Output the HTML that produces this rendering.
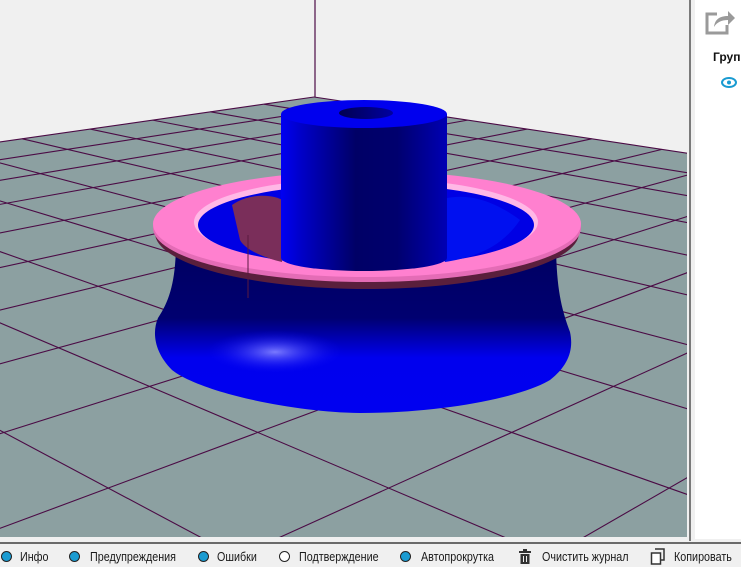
<!DOCTYPE html>
<html><head><meta charset="utf-8"><style>
html,body{margin:0;padding:0;width:741px;height:567px;overflow:hidden;background:#f0f0f0;font-family:"Liberation Sans",sans-serif;}
#vp{position:absolute;left:0;top:0;width:687px;height:537px;overflow:hidden;background:#f0f0f0}
.t{position:absolute;top:550px;font-size:12.5px;line-height:14px;color:#1a1a1a;white-space:nowrap;transform:scaleX(0.86);transform-origin:0 0}
.r{position:absolute;top:551px;width:9px;height:9px;border-radius:50%;border:1.5px solid #222;background:#1a9bd1}
</style></head><body>
<div id="vp">
<svg id="s" width="687" height="537" viewBox="0 0 687 537" xmlns="http://www.w3.org/2000/svg">
<defs>
<linearGradient id="cyl" x1="0" x2="1" y1="0" y2="0">
<stop offset="0" stop-color="#0000f2"/><stop offset="0.12" stop-color="#0000c8"/><stop offset="0.45" stop-color="#000066"/><stop offset="0.7" stop-color="#00006e"/><stop offset="1" stop-color="#0000b4"/>
</linearGradient>
<linearGradient id="body" x1="0" x2="0" y1="0" y2="1">
<stop offset="0" stop-color="#000060"/><stop offset="0.45" stop-color="#000070"/><stop offset="0.58" stop-color="#0000b8"/><stop offset="0.68" stop-color="#0000ee"/><stop offset="1" stop-color="#0000f0"/>
</linearGradient>
<radialGradient id="hl" cx="0.5" cy="0.5" r="0.5">
<stop offset="0" stop-color="#7a7aff"/><stop offset="1" stop-color="#0000ee" stop-opacity="0"/>
</radialGradient>
<linearGradient id="hole" x1="0" x2="1"><stop offset="0" stop-color="#000050"/><stop offset="1" stop-color="#0000a0"/></linearGradient>
</defs>
<line x1="315" y1="0" x2="315" y2="97" stroke="#4b0b45" stroke-width="1.2"/>
<polygon points="0,142 314,97 687,153 687,537 0,537" fill="#8ca0a1"/>
<g id="grid" stroke="#4b0b45" stroke-width="1.1"></g>
<path d="M176,240 C176,280 170,300 158,318 C152,332 154,352 172,370 C200,392 290,412 360,413 C440,413 520,398 550,380 C568,366 574,350 570,332 C562,310 556,290 556,240 Z" fill="url(#body)"/>
<ellipse cx="275" cy="352" rx="70" ry="22" fill="url(#hl)"/>
<ellipse cx="367" cy="233" rx="212" ry="56" fill="#5a1f3c"/>
<ellipse cx="367" cy="228" rx="214" ry="54" fill="#e46cb6"/>
<ellipse cx="367" cy="224" rx="214" ry="53" fill="#ff80cf"/>
<ellipse cx="366" cy="222" rx="172" ry="44" fill="#ffb8e6"/>
<ellipse cx="366" cy="225" rx="168" ry="41" fill="#0000e4"/>
<path d="M232,205 C250,192 275,195 282,200 L282,262 C265,258 245,250 240,240 Z" fill="#7a2e5a"/>
<path d="M440,200 C470,190 500,205 520,220 C500,250 470,258 445,262 Z" fill="#0010f0"/>
<path d="M281,114 L281,258 A83,13 0 0 0 447,258 L447,114 Z" fill="url(#cyl)"/>
<ellipse cx="364" cy="114" rx="83" ry="14" fill="#0000ee"/>
<ellipse cx="366" cy="113" rx="27" ry="6" fill="url(#hole)"/>
<line x1="248" y1="235" x2="248" y2="298" stroke="#5a1a40" stroke-width="1"/>
</svg>
</div>
<div style="position:absolute;left:687px;top:0;width:54px;height:541px;background:#f0f0f0"></div>
<div style="position:absolute;left:689px;top:0;width:2px;height:541px;background:#7a7a7a"></div>
<div style="position:absolute;left:695px;top:0;width:46px;height:539px;background:#fff"></div>
<svg style="position:absolute;left:703px;top:6px" width="34" height="30" viewBox="0 0 34 30">
<path d="M14,8 H4 V27 H24 V19" fill="none" stroke="#9a9a9a" stroke-width="3"/>
<path d="M11,21 C12,13 17,10 25,10 V5 L32,12 L25,19 V14 C19,14 14,16 11,21 Z" fill="#9a9a9a"/>
</svg>
<div style="position:absolute;left:713px;top:50px;font:bold 12px 'Liberation Sans',sans-serif;color:#111">Груп</div>
<svg style="position:absolute;left:721px;top:77px" width="16" height="11" viewBox="0 0 16 11"><ellipse cx="8" cy="5.5" rx="7" ry="4.5" fill="none" stroke="#1a9bd1" stroke-width="2"/><circle cx="8" cy="5.5" r="2" fill="#1a9bd1"/></svg>
<div style="position:absolute;left:0;top:542px;width:741px;height:2px;background:#6a6a6a"></div>
<span class="r" style="left:1px"></span><span class="t" style="left:20px">Инфо</span>
<span class="r" style="left:69px"></span><span class="t" style="left:90px">Предупреждения</span>
<span class="r" style="left:198px"></span><span class="t" style="left:217px">Ошибки</span>
<span class="r" style="left:279px;background:#fff"></span><span class="t" style="left:299px">Подтверждение</span>
<span class="r" style="left:400px"></span><span class="t" style="left:421px">Автопрокрутка</span>
<svg style="position:absolute;left:519px;top:549px" width="12" height="15" viewBox="0 0 12 15"><rect x="0" y="2" width="12" height="2" fill="#333"/><rect x="4" y="0" width="4" height="2" fill="#333"/><rect x="1.5" y="5" width="9" height="10" fill="#333"/><rect x="4" y="7" width="1" height="6" fill="#f0f0f0"/><rect x="7" y="7" width="1" height="6" fill="#f0f0f0"/></svg>
<span class="t" style="left:542px">Очистить журнал</span>
<svg style="position:absolute;left:650px;top:548px" width="16" height="17" viewBox="0 0 16 17"><path d="M5,1 H14 V12 H11" fill="none" stroke="#333" stroke-width="1.5"/><rect x="1.5" y="5" width="9" height="11" fill="#fff" stroke="#333" stroke-width="1.5"/></svg>
<span class="t" style="left:674px">Копировать</span>
<script>
(function(){
var g=document.getElementById('grid');
var cx=314,cy=97,Ux=-995,Uy=-100,Vx=1689,Vy=-100;
function P(a,b){var d=1+a+b;return [(a*Ux+b*Vx+cx)/d,(a*Uy+b*Vy+cy)/d];}
var st=-0.035,s='';
for(var j=0;j<28;j++){var t=st*j;if(Math.abs(t)>0.97)break;var e=-(0.985-Math.abs(t));
 var p1=P(0,t),p2=P(e,t);s+='<line x1="'+p1[0]+'" y1="'+p1[1]+'" x2="'+p2[0]+'" y2="'+p2[1]+'"/>';
 var q1=P(t,0),q2=P(t,e);s+='<line x1="'+q1[0]+'" y1="'+q1[1]+'" x2="'+q2[0]+'" y2="'+q2[1]+'"/>';}
g.innerHTML=s;
})();
</script>
</body></html>
